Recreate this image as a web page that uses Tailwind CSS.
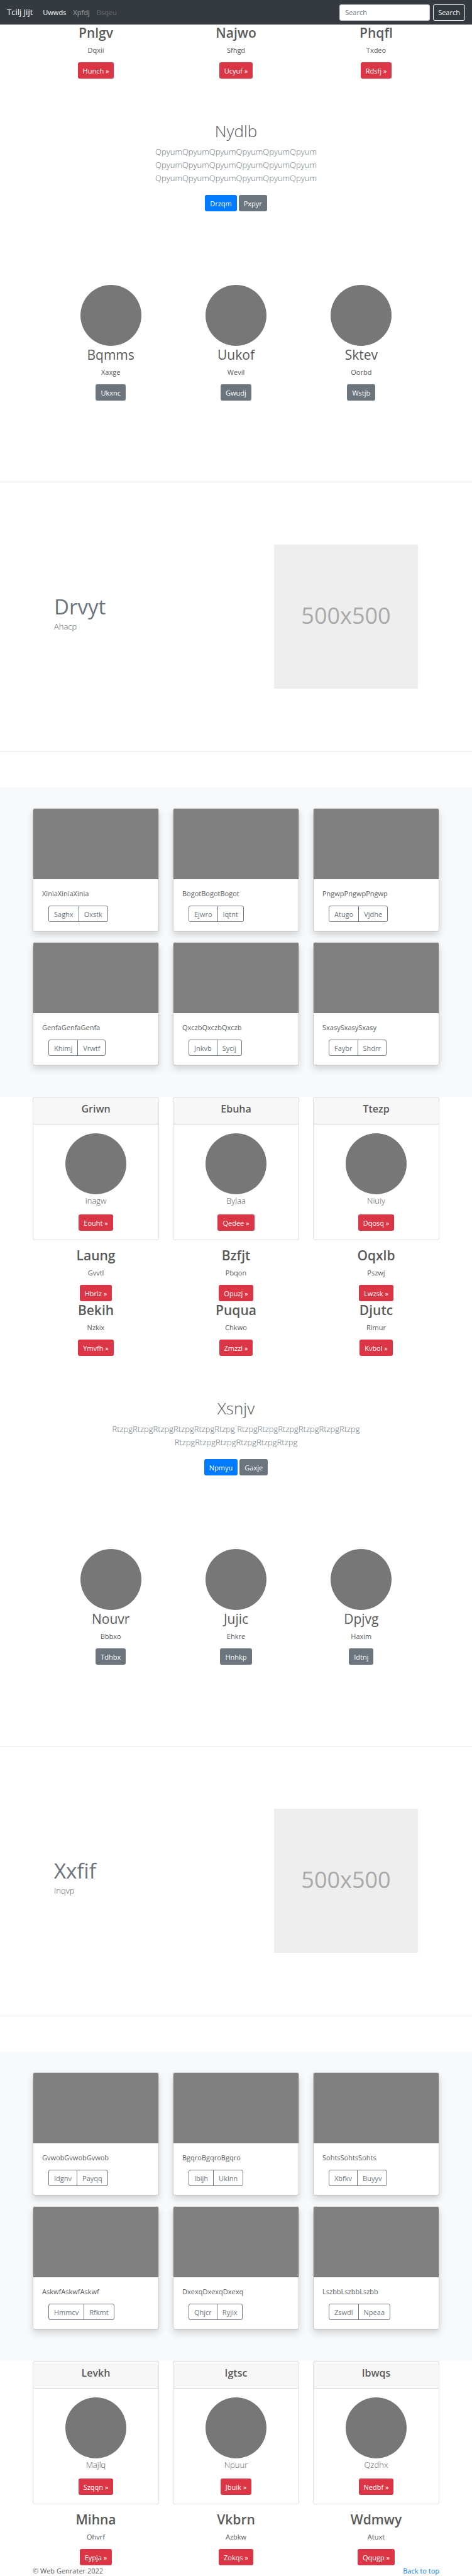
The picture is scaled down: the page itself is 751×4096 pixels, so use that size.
<!DOCTYPE html>
<html lang="en">
<head>
<meta charset="utf-8">
<meta name="viewport" content="width=device-width, initial-scale=1">
<title>Tcilj Jijt</title>
<script src="https://cdn.jsdelivr.net/npm/@tailwindcss/browser@4"></script>
</head>
<body class="bg-white font-['Open_Sans','Noto_Sans',sans-serif] text-[11px] leading-[17px] text-[#5a5a5a]">

<header>
<nav class="flex h-[39px] items-center bg-[#343a40] px-[11px]">
<a href="#" class="mr-4 text-[13px] text-white">Tcilj Jijt</a>
<a href="#" class="mr-[11px] text-white">Uwwds</a>
<a href="#" class="mr-[11px] text-white/50">Xpfdj</a>
<a href="#" class="text-white/25">Bsqeu</a>
<form class="ml-auto flex gap-[5px]">
<input type="search" aria-label="Search" placeholder="Search" class="h-[26px] w-36 rounded-[3px] border border-[#ced4da] bg-white px-2 text-[11px] placeholder:text-[#6c757d]">
<button type="submit" class="h-[26px] rounded-[3px] border border-[#f8f9fa] px-[7px] text-[#f8f9fa]">Search</button>
</form>
</nav>
</header>

<main>
<section class="mx-[52px] grid grid-cols-3 gap-x-[22px] text-center">
<div><h2 class="mb-[5px] text-[21px] leading-[27px] font-semibold">Pnlgv</h2><p class="mb-[11px]">Dqxii</p><a href="#" class="inline-flex h-[26px] items-center rounded-[3px] bg-[#dc3545] px-2 align-top text-white">Hunch »</a></div>
<div><h2 class="mb-[5px] text-[21px] leading-[27px] font-semibold">Najwo</h2><p class="mb-[11px]">Sfhgd</p><a href="#" class="inline-flex h-[26px] items-center rounded-[3px] bg-[#dc3545] px-2 align-top text-white">Ucyuf »</a></div>
<div><h2 class="mb-[5px] text-[21px] leading-[27px] font-semibold">Phqfl</h2><p class="mb-[11px]">Txdeo</p><a href="#" class="inline-flex h-[26px] items-center rounded-[3px] bg-[#dc3545] px-2 align-top text-white">Rdsfj »</a></div>
</section>

<section class="mx-auto max-w-[440px] pt-[67px] text-center">
<h1 class="mb-[6px] text-[26px] leading-[33px] font-light">Nydlb</h1>
<p class="mb-4 text-[13px] leading-[21px] font-light text-[#6c757d]">QpyumQpyumQpyumQpyumQpyumQpyum QpyumQpyumQpyumQpyumQpyumQpyum QpyumQpyumQpyumQpyumQpyumQpyum</p>
<div class="flex justify-center gap-[3px]">
<a href="#" class="inline-flex h-[26px] items-center rounded-[3px] bg-[#007bff] px-2 text-white">Drzqm</a>
<a href="#" class="inline-flex h-[26px] items-center rounded-[3px] bg-[#6c757d] px-2 text-white">Pxpyr</a>
</div>
</section>

<section class="mx-auto grid max-w-[598px] grid-cols-3 pt-[117px] pb-[129px] text-center">
<div><div class="mx-auto mb-px size-[97px] rounded-full bg-[#777]"></div><h2 class="mb-[5px] text-[21px] leading-[27px]">Bqmms</h2><p class="mb-[11px]">Xaxge</p><a href="#" class="inline-flex h-[26px] items-center rounded-[3px] bg-[#6c757d] px-2 align-top text-white">Ukxnc</a></div>
<div><div class="mx-auto mb-px size-[97px] rounded-full bg-[#777]"></div><h2 class="mb-[5px] text-[21px] leading-[27px]">Uukof</h2><p class="mb-[11px]">Wevil</p><a href="#" class="inline-flex h-[26px] items-center rounded-[3px] bg-[#6c757d] px-2 align-top text-white">Gwudj</a></div>
<div><div class="mx-auto mb-px size-[97px] rounded-full bg-[#777]"></div><h2 class="mb-[5px] text-[21px] leading-[27px]">Sktev</h2><p class="mb-[11px]">Oorbd</p><a href="#" class="inline-flex h-[26px] items-center rounded-[3px] bg-[#6c757d] px-2 align-top text-white">Wstjb</a></div>
</section>

<hr class="border-[#e5e5e5]">
<section class="mx-[86px] flex items-center justify-between pt-[99px] pb-[100px]">
<div class="pb-[11px]"><h2 class="text-[33px] leading-[43px] text-[#6c757d]">Drvyt</h2><p class="text-[13px] leading-[21px] font-light">Ahacp</p></div>
<div role="img" aria-label="500x500" class="flex size-[229px] items-center justify-center bg-[#eee] pb-1 text-[36px] text-[#aaa]">500x500</div>
</section>
<hr class="border-[#e5e5e5]">

<section class="mt-[56px] grid grid-cols-3 gap-x-[22px] gap-y-[17px] bg-[#f8f9fa] px-[52px] pt-[33px] pb-[50px]">
<article class="overflow-hidden rounded-[3px] border border-black/12 bg-white bg-clip-padding shadow-[0_6px_11px_rgba(0,0,0,0.15)]"><div class="h-28 bg-[#808080]"></div><div class="p-[14px]"><p class="mb-[11px]">XiniaXiniaXinia</p><div class="ml-[10px] flex text-[#6c757d]"><button class="h-[26px] rounded-l-[3px] border border-[#6c757d] px-2">Saghx</button><button class="-ml-px h-[26px] rounded-r-[3px] border border-[#6c757d] px-2">Oxstk</button></div></div></article>
<article class="overflow-hidden rounded-[3px] border border-black/12 bg-white bg-clip-padding shadow-[0_6px_11px_rgba(0,0,0,0.15)]"><div class="h-28 bg-[#808080]"></div><div class="p-[14px]"><p class="mb-[11px]">BogotBogotBogot</p><div class="ml-[10px] flex text-[#6c757d]"><button class="h-[26px] rounded-l-[3px] border border-[#6c757d] px-2">Ejwro</button><button class="-ml-px h-[26px] rounded-r-[3px] border border-[#6c757d] px-2">Iqtnt</button></div></div></article>
<article class="overflow-hidden rounded-[3px] border border-black/12 bg-white bg-clip-padding shadow-[0_6px_11px_rgba(0,0,0,0.15)]"><div class="h-28 bg-[#808080]"></div><div class="p-[14px]"><p class="mb-[11px]">PngwpPngwpPngwp</p><div class="ml-[10px] flex text-[#6c757d]"><button class="h-[26px] rounded-l-[3px] border border-[#6c757d] px-2">Atugo</button><button class="-ml-px h-[26px] rounded-r-[3px] border border-[#6c757d] px-2">Vjdhe</button></div></div></article>
<article class="overflow-hidden rounded-[3px] border border-black/12 bg-white bg-clip-padding shadow-[0_6px_11px_rgba(0,0,0,0.15)]"><div class="h-28 bg-[#808080]"></div><div class="p-[14px]"><p class="mb-[11px]">GenfaGenfaGenfa</p><div class="ml-[10px] flex text-[#6c757d]"><button class="h-[26px] rounded-l-[3px] border border-[#6c757d] px-2">Khimj</button><button class="-ml-px h-[26px] rounded-r-[3px] border border-[#6c757d] px-2">Vrwtf</button></div></div></article>
<article class="overflow-hidden rounded-[3px] border border-black/12 bg-white bg-clip-padding shadow-[0_6px_11px_rgba(0,0,0,0.15)]"><div class="h-28 bg-[#808080]"></div><div class="p-[14px]"><p class="mb-[11px]">QxczbQxczbQxczb</p><div class="ml-[10px] flex text-[#6c757d]"><button class="h-[26px] rounded-l-[3px] border border-[#6c757d] px-2">Jnkvb</button><button class="-ml-px h-[26px] rounded-r-[3px] border border-[#6c757d] px-2">Sycij</button></div></div></article>
<article class="overflow-hidden rounded-[3px] border border-black/12 bg-white bg-clip-padding shadow-[0_6px_11px_rgba(0,0,0,0.15)]"><div class="h-28 bg-[#808080]"></div><div class="p-[14px]"><p class="mb-[11px]">SxasySxasySxasy</p><div class="ml-[10px] flex text-[#6c757d]"><button class="h-[26px] rounded-l-[3px] border border-[#6c757d] px-2">Faybr</button><button class="-ml-px h-[26px] rounded-r-[3px] border border-[#6c757d] px-2">Shdrr</button></div></div></article>
</section>

<section class="mx-[52px] mb-[11px] grid grid-cols-3 gap-x-[22px] text-center">
<article class="rounded-[3px] border border-black/12"><h4 class="border-b border-black/12 bg-black/3 pt-2 pb-[14px] text-[16px] leading-[20px] font-semibold">Griwn</h4><div class="p-[14px]"><div class="mx-auto size-[97px] rounded-full bg-[#777]"></div><p class="mb-[11px] text-[13px] leading-[21px] font-light">Inagw</p><a href="#" class="inline-flex h-[26px] items-center rounded-[3px] bg-[#dc3545] px-2 align-top text-white">Eouht »</a></div></article>
<article class="rounded-[3px] border border-black/12"><h4 class="border-b border-black/12 bg-black/3 pt-2 pb-[14px] text-[16px] leading-[20px] font-semibold">Ebuha</h4><div class="p-[14px]"><div class="mx-auto size-[97px] rounded-full bg-[#777]"></div><p class="mb-[11px] text-[13px] leading-[21px] font-light">Bylaa</p><a href="#" class="inline-flex h-[26px] items-center rounded-[3px] bg-[#dc3545] px-2 align-top text-white">Qedee »</a></div></article>
<article class="rounded-[3px] border border-black/12"><h4 class="border-b border-black/12 bg-black/3 pt-2 pb-[14px] text-[16px] leading-[20px] font-semibold">Ttezp</h4><div class="p-[14px]"><div class="mx-auto size-[97px] rounded-full bg-[#777]"></div><p class="mb-[11px] text-[13px] leading-[21px] font-light">Niuiy</p><a href="#" class="inline-flex h-[26px] items-center rounded-[3px] bg-[#dc3545] px-2 align-top text-white">Dqosq »</a></div></article>
</section>

<section class="mx-[52px] grid grid-cols-3 gap-x-[22px] gap-y-px text-center">
<div><h2 class="mb-[5px] text-[21px] leading-[27px] font-semibold">Laung</h2><p class="mb-[11px]">Gvvtl</p><a href="#" class="inline-flex h-[26px] items-center rounded-[3px] bg-[#dc3545] px-2 align-top text-white">Hbriz »</a></div>
<div><h2 class="mb-[5px] text-[21px] leading-[27px] font-semibold">Bzfjt</h2><p class="mb-[11px]">Pbqon</p><a href="#" class="inline-flex h-[26px] items-center rounded-[3px] bg-[#dc3545] px-2 align-top text-white">Opuzj »</a></div>
<div><h2 class="mb-[5px] text-[21px] leading-[27px] font-semibold">Oqxlb</h2><p class="mb-[11px]">Pszwj</p><a href="#" class="inline-flex h-[26px] items-center rounded-[3px] bg-[#dc3545] px-2 align-top text-white">Lwzsk »</a></div>
<div><h2 class="mb-[5px] text-[21px] leading-[27px] font-semibold">Bekih</h2><p class="mb-[11px]">Nzkix</p><a href="#" class="inline-flex h-[26px] items-center rounded-[3px] bg-[#dc3545] px-2 align-top text-white">Ymvfh »</a></div>
<div><h2 class="mb-[5px] text-[21px] leading-[27px] font-semibold">Puqua</h2><p class="mb-[11px]">Chkwo</p><a href="#" class="inline-flex h-[26px] items-center rounded-[3px] bg-[#dc3545] px-2 align-top text-white">Zmzzl »</a></div>
<div><h2 class="mb-[5px] text-[21px] leading-[27px] font-semibold">Djutc</h2><p class="mb-[11px]">Rimur</p><a href="#" class="inline-flex h-[26px] items-center rounded-[3px] bg-[#dc3545] px-2 align-top text-white">Kvbol »</a></div>
</section>

<section class="mx-auto max-w-[440px] pt-[67px] text-center">
<h1 class="mb-[6px] text-[26px] leading-[33px] font-light">Xsnjv</h1>
<p class="mb-4 text-[13px] leading-[21px] font-light text-[#6c757d]">RtzpgRtzpgRtzpgRtzpgRtzpgRtzpg RtzpgRtzpgRtzpgRtzpgRtzpgRtzpg RtzpgRtzpgRtzpgRtzpgRtzpgRtzpg</p>
<div class="flex justify-center gap-[3px]">
<a href="#" class="inline-flex h-[26px] items-center rounded-[3px] bg-[#007bff] px-2 text-white">Npmyu</a>
<a href="#" class="inline-flex h-[26px] items-center rounded-[3px] bg-[#6c757d] px-2 text-white">Gaxje</a>
</div>
</section>

<section class="mx-auto grid max-w-[598px] grid-cols-3 pt-[117px] pb-[129px] text-center">
<div><div class="mx-auto mb-px size-[97px] rounded-full bg-[#777]"></div><h2 class="mb-[5px] text-[21px] leading-[27px]">Nouvr</h2><p class="mb-[11px]">Bbbxo</p><a href="#" class="inline-flex h-[26px] items-center rounded-[3px] bg-[#6c757d] px-2 align-top text-white">Tdhbx</a></div>
<div><div class="mx-auto mb-px size-[97px] rounded-full bg-[#777]"></div><h2 class="mb-[5px] text-[21px] leading-[27px]">Jujic</h2><p class="mb-[11px]">Ehkre</p><a href="#" class="inline-flex h-[26px] items-center rounded-[3px] bg-[#6c757d] px-2 align-top text-white">Hnhkp</a></div>
<div><div class="mx-auto mb-px size-[97px] rounded-full bg-[#777]"></div><h2 class="mb-[5px] text-[21px] leading-[27px]">Dpjvg</h2><p class="mb-[11px]">Haxim</p><a href="#" class="inline-flex h-[26px] items-center rounded-[3px] bg-[#6c757d] px-2 align-top text-white">Idtnj</a></div>
</section>

<hr class="border-[#e5e5e5]">
<section class="mx-[86px] flex items-center justify-between pt-[99px] pb-[100px]">
<div class="pb-[11px]"><h2 class="text-[33px] leading-[43px] text-[#6c757d]">Xxfif</h2><p class="text-[13px] leading-[21px] font-light">Inqvp</p></div>
<div role="img" aria-label="500x500" class="flex size-[229px] items-center justify-center bg-[#eee] pb-1 text-[36px] text-[#aaa]">500x500</div>
</section>
<hr class="border-[#e5e5e5]">

<section class="mt-[56px] grid grid-cols-3 gap-x-[22px] gap-y-[17px] bg-[#f8f9fa] px-[52px] pt-[33px] pb-[50px]">
<article class="overflow-hidden rounded-[3px] border border-black/12 bg-white bg-clip-padding shadow-[0_6px_11px_rgba(0,0,0,0.15)]"><div class="h-28 bg-[#808080]"></div><div class="p-[14px]"><p class="mb-[11px]">GvwobGvwobGvwob</p><div class="ml-[10px] flex text-[#6c757d]"><button class="h-[26px] rounded-l-[3px] border border-[#6c757d] px-2">Idgnv</button><button class="-ml-px h-[26px] rounded-r-[3px] border border-[#6c757d] px-2">Payqq</button></div></div></article>
<article class="overflow-hidden rounded-[3px] border border-black/12 bg-white bg-clip-padding shadow-[0_6px_11px_rgba(0,0,0,0.15)]"><div class="h-28 bg-[#808080]"></div><div class="p-[14px]"><p class="mb-[11px]">BgqroBgqroBgqro</p><div class="ml-[10px] flex text-[#6c757d]"><button class="h-[26px] rounded-l-[3px] border border-[#6c757d] px-2">Ibijh</button><button class="-ml-px h-[26px] rounded-r-[3px] border border-[#6c757d] px-2">Uklnn</button></div></div></article>
<article class="overflow-hidden rounded-[3px] border border-black/12 bg-white bg-clip-padding shadow-[0_6px_11px_rgba(0,0,0,0.15)]"><div class="h-28 bg-[#808080]"></div><div class="p-[14px]"><p class="mb-[11px]">SohtsSohtsSohts</p><div class="ml-[10px] flex text-[#6c757d]"><button class="h-[26px] rounded-l-[3px] border border-[#6c757d] px-2">Xbfkv</button><button class="-ml-px h-[26px] rounded-r-[3px] border border-[#6c757d] px-2">Buyyv</button></div></div></article>
<article class="overflow-hidden rounded-[3px] border border-black/12 bg-white bg-clip-padding shadow-[0_6px_11px_rgba(0,0,0,0.15)]"><div class="h-28 bg-[#808080]"></div><div class="p-[14px]"><p class="mb-[11px]">AskwfAskwfAskwf</p><div class="ml-[10px] flex text-[#6c757d]"><button class="h-[26px] rounded-l-[3px] border border-[#6c757d] px-2">Hmmcv</button><button class="-ml-px h-[26px] rounded-r-[3px] border border-[#6c757d] px-2">Rfkmt</button></div></div></article>
<article class="overflow-hidden rounded-[3px] border border-black/12 bg-white bg-clip-padding shadow-[0_6px_11px_rgba(0,0,0,0.15)]"><div class="h-28 bg-[#808080]"></div><div class="p-[14px]"><p class="mb-[11px]">DxexqDxexqDxexq</p><div class="ml-[10px] flex text-[#6c757d]"><button class="h-[26px] rounded-l-[3px] border border-[#6c757d] px-2">Qhjcr</button><button class="-ml-px h-[26px] rounded-r-[3px] border border-[#6c757d] px-2">Ryjix</button></div></div></article>
<article class="overflow-hidden rounded-[3px] border border-black/12 bg-white bg-clip-padding shadow-[0_6px_11px_rgba(0,0,0,0.15)]"><div class="h-28 bg-[#808080]"></div><div class="p-[14px]"><p class="mb-[11px]">LszbbLszbbLszbb</p><div class="ml-[10px] flex text-[#6c757d]"><button class="h-[26px] rounded-l-[3px] border border-[#6c757d] px-2">Zswdl</button><button class="-ml-px h-[26px] rounded-r-[3px] border border-[#6c757d] px-2">Npeaa</button></div></div></article>
</section>

<section class="mx-[52px] mb-[11px] grid grid-cols-3 gap-x-[22px] text-center">
<article class="rounded-[3px] border border-black/12"><h4 class="border-b border-black/12 bg-black/3 pt-2 pb-[14px] text-[16px] leading-[20px] font-semibold">Levkh</h4><div class="p-[14px]"><div class="mx-auto size-[97px] rounded-full bg-[#777]"></div><p class="mb-[11px] text-[13px] leading-[21px] font-light">Majlq</p><a href="#" class="inline-flex h-[26px] items-center rounded-[3px] bg-[#dc3545] px-2 align-top text-white">Szqqn »</a></div></article>
<article class="rounded-[3px] border border-black/12"><h4 class="border-b border-black/12 bg-black/3 pt-2 pb-[14px] text-[16px] leading-[20px] font-semibold">Igtsc</h4><div class="p-[14px]"><div class="mx-auto size-[97px] rounded-full bg-[#777]"></div><p class="mb-[11px] text-[13px] leading-[21px] font-light">Npuur</p><a href="#" class="inline-flex h-[26px] items-center rounded-[3px] bg-[#dc3545] px-2 align-top text-white">Jbuik »</a></div></article>
<article class="rounded-[3px] border border-black/12"><h4 class="border-b border-black/12 bg-black/3 pt-2 pb-[14px] text-[16px] leading-[20px] font-semibold">Ibwqs</h4><div class="p-[14px]"><div class="mx-auto size-[97px] rounded-full bg-[#777]"></div><p class="mb-[11px] text-[13px] leading-[21px] font-light">Qzdhx</p><a href="#" class="inline-flex h-[26px] items-center rounded-[3px] bg-[#dc3545] px-2 align-top text-white">Nedbf »</a></div></article>
</section>

<section class="mx-[52px] grid grid-cols-3 gap-x-[22px] text-center">
<div><h2 class="mb-[5px] text-[21px] leading-[27px] font-semibold">Mihna</h2><p class="mb-[11px]">Ohvrf</p><a href="#" class="inline-flex h-[26px] items-center rounded-[3px] bg-[#dc3545] px-2 align-top text-white">Eypja »</a></div>
<div><h2 class="mb-[5px] text-[21px] leading-[27px] font-semibold">Vkbrn</h2><p class="mb-[11px]">Azbkw</p><a href="#" class="inline-flex h-[26px] items-center rounded-[3px] bg-[#dc3545] px-2 align-top text-white">Zokqs »</a></div>
<div><h2 class="mb-[5px] text-[21px] leading-[27px] font-semibold">Wdmwy</h2><p class="mb-[11px]">Atuxt</p><a href="#" class="inline-flex h-[26px] items-center rounded-[3px] bg-[#dc3545] px-2 align-top text-white">Qqugp »</a></div>
</section>
</main>

<footer class="mx-[52px] flex justify-between">
<p>© Web Genrater 2022</p>
<a href="#" class="text-[#007bff]">Back to top</a>
</footer>
</body>
</html>
